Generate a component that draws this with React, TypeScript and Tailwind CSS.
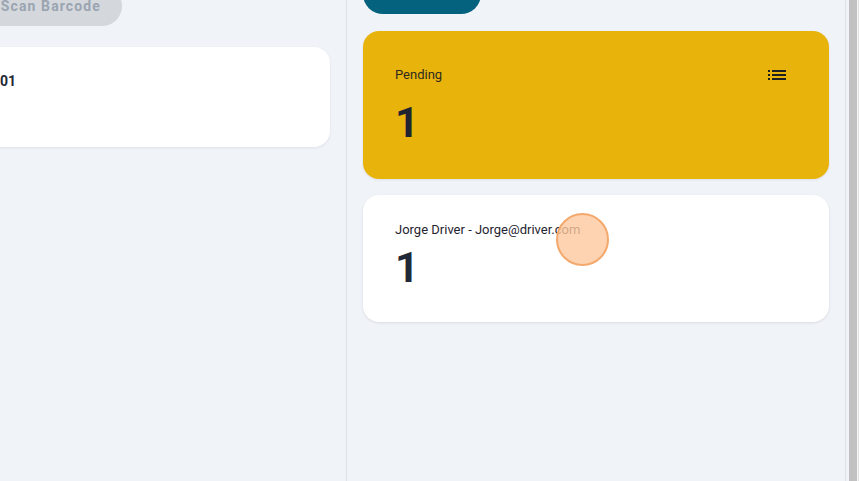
function ListIcon() {
  return (
    <svg width="24" height="24" viewBox="0 0 24 24" fill="#1f1f1f">
      <path d="M3 13h2v-2H3v2zm0 4h2v-2H3v2zm0-8h2V7H3v2zm4 4h14v-2H7v2zm0 4h14v-2H7v2zM7 7v2h14V7H7z" />
    </svg>
  );
}

export default function App() {
  return (
    <div
      className="relative flex h-[481px] w-[860px] overflow-hidden bg-[#f0f3f8]"
      style={{ fontFamily: "Roboto, 'Liberation Sans', sans-serif" }}
    >
      {/* left panel */}
      <div className="flex w-[347px] shrink-0 flex-col gap-[21px] overflow-hidden border-r border-[#dde2e8] pr-4">
        <button className="-ml-[30px] -mt-[14px] flex h-10 w-[152px] items-center justify-end rounded-full bg-[#d4d8dd] pr-[21px] text-[14px] font-bold tracking-[0.08em] text-[#9ba4b1]">
          Scan Barcode
        </button>
        <div className="-ml-[40px] h-[100px] rounded-2xl bg-white pl-10 pt-6 shadow-[0_1px_3px_rgba(0,0,0,0.08)]">
          <div className="text-[14px] font-bold leading-5 text-[#1f2937]">01</div>
        </div>
      </div>

      {/* right panel */}
      <div className="flex w-[499px] shrink-0 flex-col gap-[17px] border-r border-[#dde2e8] px-4">
        <button className="-mt-[26px] flex h-10 w-[118px] items-center justify-center rounded-full bg-[#05627e] text-[13px] font-medium text-white">
          Add Order
        </button>

        <div className="rounded-2xl bg-[#e8b30b] py-8 pl-8 pr-10 shadow-[0_1px_3px_rgba(0,0,0,0.08)]">
          <div className="flex h-6 items-center justify-between">
            <span className="-mt-[1px] text-[13px] text-[#2d2a22]">Pending</span>
            <ListIcon />
          </div>
          <div className="mt-3 text-[42px] font-bold leading-[48px] text-[#1f2430]">1</div>
        </div>

        <div className="-mt-[1px] h-[127px] rounded-2xl bg-white px-8 pt-[25px] shadow-[0_1px_3px_rgba(0,0,0,0.1)]">
          <div className="text-[13px] leading-5 text-[#1f2430]">
            Jorge Driver - Jorge@driver.com
          </div>
          <div className="mt-1 text-[42px] font-bold leading-[48px] text-[#1f2937]">1</div>
        </div>
      </div>

      {/* scrollbar */}
      <div className="flex w-[14px] shrink-0">
        <div className="w-[3px] bg-[#f0f3f8]" />
        <div className="w-[8px] bg-[#c1c1c1]" />
        <div className="w-[1px] bg-[#f7f7f7]" />
        <div className="w-[1px] bg-[#e2e2e2]" />
        <div className="w-[1px] bg-white" />
      </div>

      {/* click indicator */}
      <div className="absolute left-[556px] top-[213px] h-[53px] w-[53px] rounded-full border-2 border-[#f3a86c] bg-[#fdc89d]/80" />
    </div>
  );
}
